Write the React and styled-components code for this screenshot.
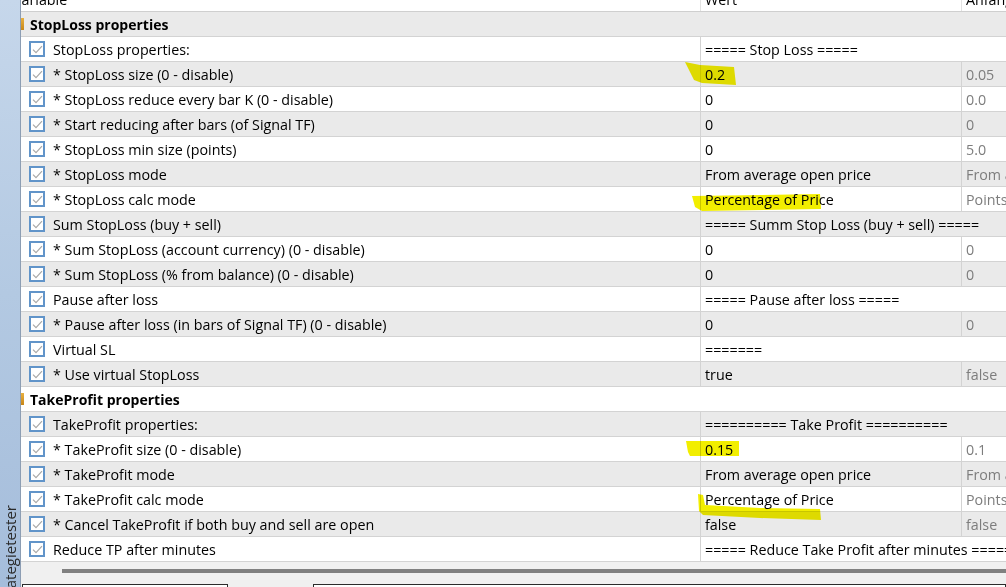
import React from "react";
import styled, { createGlobalStyle } from "styled-components";

const GlobalStyle = createGlobalStyle`
  html, body {
    margin: 0;
    padding: 0;
    overflow: hidden;
    background: #f0f0f0;
  }
  body {
    font-family: "Open Sans", "Noto Sans", "Liberation Sans", sans-serif;
    font-size: 14.3px;
    color: #000;
  }
`;

const stopLoss = [
  { name: "StopLoss properties:", value: "===== Stop Loss =====", span: true },
  { name: "* StopLoss size (0 - disable)", value: "0.2", start: "0.05" },
  { name: "* StopLoss reduce every bar K (0 - disable)", value: "0", start: "0.0" },
  { name: "* Start reducing after bars (of Signal TF)", value: "0", start: "0" },
  { name: "* StopLoss min size (points)", value: "0", start: "5.0" },
  { name: "* StopLoss mode", value: "From average open price", start: "From average open price" },
  { name: "* StopLoss calc mode", value: "Percentage of Price", start: "Points" },
  { name: "Sum StopLoss (buy + sell)", value: "===== Summ Stop Loss (buy + sell) =====", span: true },
  { name: "* Sum StopLoss (account currency) (0 - disable)", value: "0", start: "0" },
  { name: "* Sum StopLoss (% from balance) (0 - disable)", value: "0", start: "0" },
  { name: "Pause after loss", value: "===== Pause after loss =====", span: true },
  { name: "* Pause after loss (in bars of Signal TF) (0 - disable)", value: "0", start: "0" },
  { name: "Virtual SL", value: "=======", span: true },
  { name: "* Use virtual StopLoss", value: "true", start: "false" }
];

const takeProfit = [
  { name: "TakeProfit properties:", value: "========== Take Profit ==========", span: true },
  { name: "* TakeProfit size (0 - disable)", value: "0.15", start: "0.1" },
  { name: "* TakeProfit mode", value: "From average open price", start: "From average open price" },
  { name: "* TakeProfit calc mode", value: "Percentage of Price", start: "Points" },
  { name: "* Cancel TakeProfit if both buy and sell are open", value: "false", start: "false" },
  { name: "Reduce TP after minutes", value: "===== Reduce Take Profit after minutes =====", span: true }
];

const groups = [
  { title: "StopLoss properties", rows: stopLoss },
  { title: "TakeProfit properties", rows: takeProfit }
];

const CheckBox = () => (
  <Box>
    <svg width="11" height="9" viewBox="0 0 11 9">
      <path d="M1 4.6 L4 7.6 L10 1.2" fill="none" stroke="#a8a8a8" strokeWidth="1.2" />
    </svg>
  </Box>
);

const App = () => {
  let idx = 0;
  return (
    <>
      <GlobalStyle />
      <Frame>
        <Sidebar>
          <SideLabel>Strategietester</SideLabel>
        </Sidebar>
        <Main>
          <Table>
            <HeadRow>
              <HeadCell>
                <span style={{ marginLeft: -8 }}>Variable</span>
              </HeadCell>
              <HeadCell>Wert</HeadCell>
              <HeadCell $last>Anfangswert</HeadCell>
            </HeadRow>
            {groups.map((g) => {
              const headAlt = idx++ % 2 === 0;
              return (
                <React.Fragment key={g.title}>
                  <GroupRow $alt={headAlt}>
                    <Marker />
                    {g.title}
                  </GroupRow>
                  {g.rows.map((r) => {
                    const alt = idx++ % 2 === 0;
                    return (
                      <Row key={r.name} $alt={alt}>
                        <NameCell>
                          <CheckBox />
                          {r.name}
                        </NameCell>
                        <ValueCell $span={r.span}>{r.value}</ValueCell>
                        {!r.span && <StartCell>{r.start}</StartCell>}
                      </Row>
                    );
                  })}
                </React.Fragment>
              );
            })}
          </Table>
          <Footer>
            <ScrollTrack>
              <Thumb />
            </ScrollTrack>
            <Tabs>
              <TabBox $w="204px" />
              <TabGap />
              <TabBox />
            </Tabs>
          </Footer>
          {/* gelbe Markierungen */}
          <Marks viewBox="21 0 985 587" width="985" height="587">
            <path d="M685 62 L700 65 L734 67 L736 85 L702 83 L694 80 Z" />
            <path d="M692 196 L820 194 L821 209 L702 211 L695 207 Z" />
            <path d="M686 441 L739 441 L739 456 L690 456 L688 452 Z" />
            <path d="M698 494 L703 495 L705 505 L760 508 L820 509 L821 520 L760 518 L703 515 L699 511 Z" />
          </Marks>
        </Main>
      </Frame>
    </>
  );
};

export default App;

const Frame = styled.div`
  display: flex;
  width: 1006px;
  height: 587px;
  overflow: hidden;
`;

const Sidebar = styled.div`
  width: 20px;
  flex: none;
  display: flex;
  flex-direction: column;
  justify-content: flex-end;
  align-items: center;
  overflow: hidden;
  background: linear-gradient(180deg, #c6d7eb 0%, #b3c9e2 50%, #a5bddb 100%);
  border-right: 1px solid #8c9db3;
`;

const SideLabel = styled.div`
  writing-mode: vertical-rl;
  transform: rotate(180deg);
  font-size: 15px;
  color: #2a2a2a;
  white-space: nowrap;
  margin-bottom: -21px;
`;

const Main = styled.div`
  position: relative;
  flex: 1;
  min-width: 0;
  display: flex;
  flex-direction: column;
  overflow: hidden;
  background: #f0f0f0;
`;

const Table = styled.div`
  display: flex;
  flex-direction: column;
  background: #fff;
  overflow: hidden;
`;

const rowBase = `
  display: grid;
  grid-template-columns: 680px 261px 1fr;
  height: 25px;
  box-sizing: border-box;
  border-bottom: 1px solid #d3d3d3;
  white-space: nowrap;
`;

const HeadRow = styled.div`
  ${rowBase}
  margin-top: -13px;
  background: #fff;
  border-bottom-color: #cfcfcf;
`;

const HeadCell = styled.div`
  display: flex;
  align-items: center;
  padding-left: 4px;
  overflow: hidden;
  border-right: ${(p) => (p.$last ? "none" : "1px solid #e2e2e2")};
  &:first-child {
    padding-left: 0;
  }
`;

const GroupRow = styled.div`
  display: flex;
  align-items: center;
  gap: 6px;
  height: 25px;
  box-sizing: border-box;
  border-bottom: 1px solid #d3d3d3;
  background: ${(p) => (p.$alt ? "#eaeaea" : "#fff")};
  font-weight: 700;
  font-size: 14px;
`;

const Marker = styled.span`
  width: 3px;
  height: 12px;
  background: linear-gradient(180deg, #e8b040, #c78618);
`;

const Row = styled.div`
  ${rowBase}
  background: ${(p) => (p.$alt ? "#eaeaea" : "#fff")};
`;

const NameCell = styled.div`
  display: flex;
  align-items: center;
  gap: 8px;
  padding-left: 8px;
  border-right: 1px solid #d3d3d3;
  overflow: hidden;
`;

const Box = styled.span`
  width: 16px;
  height: 16px;
  box-sizing: border-box;
  border: 2px solid #6194c9;
  background: #fff;
  display: flex;
  align-items: center;
  justify-content: center;
  flex: none;
`;

const ValueCell = styled.div`
  display: flex;
  align-items: center;
  padding-left: 4px;
  grid-column: ${(p) => (p.$span ? "span 2" : "auto")};
  border-right: ${(p) => (p.$span ? "none" : "1px solid #d3d3d3")};
  overflow: hidden;
`;

const StartCell = styled.div`
  display: flex;
  align-items: center;
  padding-left: 4px;
  color: #7d7d7d;
  overflow: hidden;
`;

const Footer = styled.div`
  flex: 1;
  display: flex;
  flex-direction: column;
  background: #f0f0f0;
`;

const ScrollTrack = styled.div`
  height: 13px;
  padding-left: 41px;
  display: flex;
  align-items: center;
  padding-top: 2px;
`;

const Thumb = styled.div`
  flex: 1;
  height: 4px;
  background: #808080;
`;

const Tabs = styled.div`
  display: flex;
  margin-top: 7px;
  flex: 1;
`;

const TabBox = styled.div`
  width: ${(p) => p.$w || "auto"};
  flex: ${(p) => (p.$w ? "none" : "1")};
  margin-left: ${(p) => (p.$w ? "1px" : "0")};
  border: 1px solid #2b2b2b;
  border-bottom: none;
  background: #fff;
`;

const TabGap = styled.div`
  width: 85px;
`;

const Marks = styled.svg`
  position: absolute;
  left: 0;
  top: 0;
  pointer-events: none;
  mix-blend-mode: multiply;
  fill: #f2ee00;
`;
